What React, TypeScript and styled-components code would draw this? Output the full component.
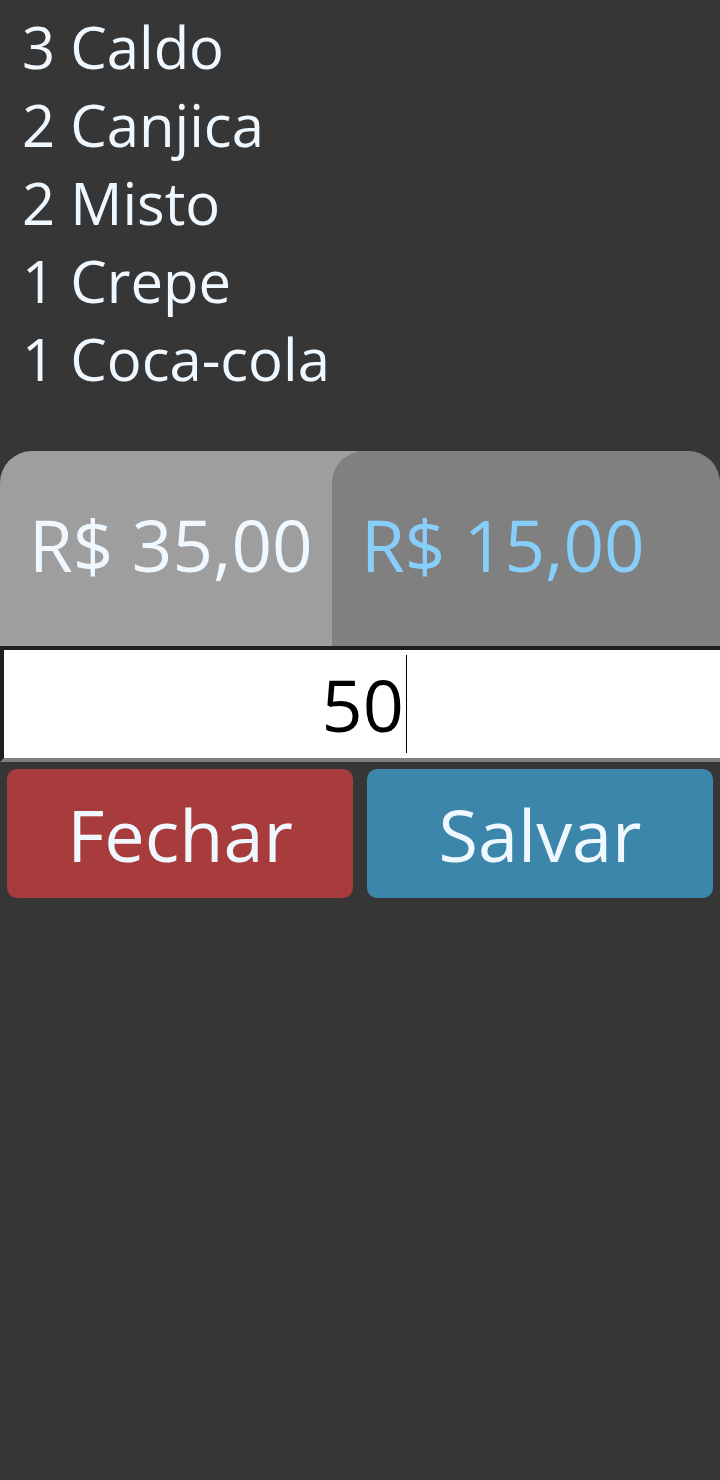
import React from "react";
import styled, { createGlobalStyle } from "styled-components";

const GlobalStyle = createGlobalStyle`
  html, body {
    margin: 0;
    padding: 0;
    background: #363636;
  }
  body {
    font-family: "Open Sans", "Noto Sans", sans-serif;
    color: aliceblue;
  }
  * { box-sizing: border-box; }
`;

const Page = styled.div`
  min-height: 1480px;
  background: #363636;
  display: flex;
  flex-direction: column;
`;

const OrderList = styled.ul`
  list-style: none;
  margin: 0;
  padding: 8px 22px 0;
  font-size: 58px;
  line-height: 78px;
`;

const OrderItem = styled.li`
  margin: 0;
  white-space: nowrap;
`;

const Tabs = styled.div`
  display: flex;
  margin-top: 53px;
  height: 195px;
  overflow: hidden;
`;

const Tab = styled.div<{ $active?: boolean; $width: string; $overlap?: number }>`
  flex: 0 0 ${(p) => p.$width};
  margin-left: ${(p) => (p.$overlap ? `-${p.$overlap}px` : "0")};
  background: ${(p) => (p.$active ? "#808080" : "#9e9e9e")};
  color: ${(p) => (p.$active ? "lightskyblue" : "aliceblue")};
  border-radius: 32px 32px 0 0;
  display: flex;
  align-items: center;
  padding: 0 0 8px 29px;
  font-size: 71px;
  white-space: nowrap;
`;

const AmountField = styled.div`
  display: flex;
  justify-content: center;
  align-items: center;
  height: 116px;
  padding-left: 5px;
  border-style: solid;
  border-width: 4px 0 4px 4px;
  border-color: #1f1f1f #7f7f7f #7f7f7f #1f1f1f;
  background: #fff;
  color: #000;
  font-size: 72px;
  line-height: 98px;
`;

const Caret = styled.span`
  display: inline-block;
  width: 1.5px;
  height: 98px;
  margin-left: 2px;
  background: #000;
`;

const Actions = styled.div`
  display: grid;
  grid-template-columns: 1fr 1fr;
  gap: 14px;
  padding: 7px;
`;

const ActionButton = styled.button<{ $tone: "danger" | "primary" }>`
  height: 129px;
  border: none;
  border-radius: 10px;
  background: ${(p) => (p.$tone === "danger" ? "#a83b3b" : "#3b86aa")};
  color: aliceblue;
  font-family: "Open Sans", "Noto Sans", sans-serif;
  font-size: 72px;
  padding: 0;
  cursor: pointer;
`;

const items = ["3 Caldo", "2 Canjica", "2 Misto", "1 Crepe", "1 Coca-cola"];

export default function App() {
  return (
    <Page>
      <GlobalStyle />
      <OrderList>
        {items.map((it) => (
          <OrderItem key={it}>{it}</OrderItem>
        ))}
      </OrderList>
      <Tabs>
        <Tab $width="396px">R$ 35,00</Tab>
        <Tab $width="388px" $overlap={64} $active>
          R$ 15,00
        </Tab>
      </Tabs>
      <AmountField role="textbox" aria-label="Valor">
        <span>50</span>
        <Caret />
      </AmountField>
      <Actions>
        <ActionButton $tone="danger">Fechar</ActionButton>
        <ActionButton $tone="primary">Salvar</ActionButton>
      </Actions>
    </Page>
  );
}
